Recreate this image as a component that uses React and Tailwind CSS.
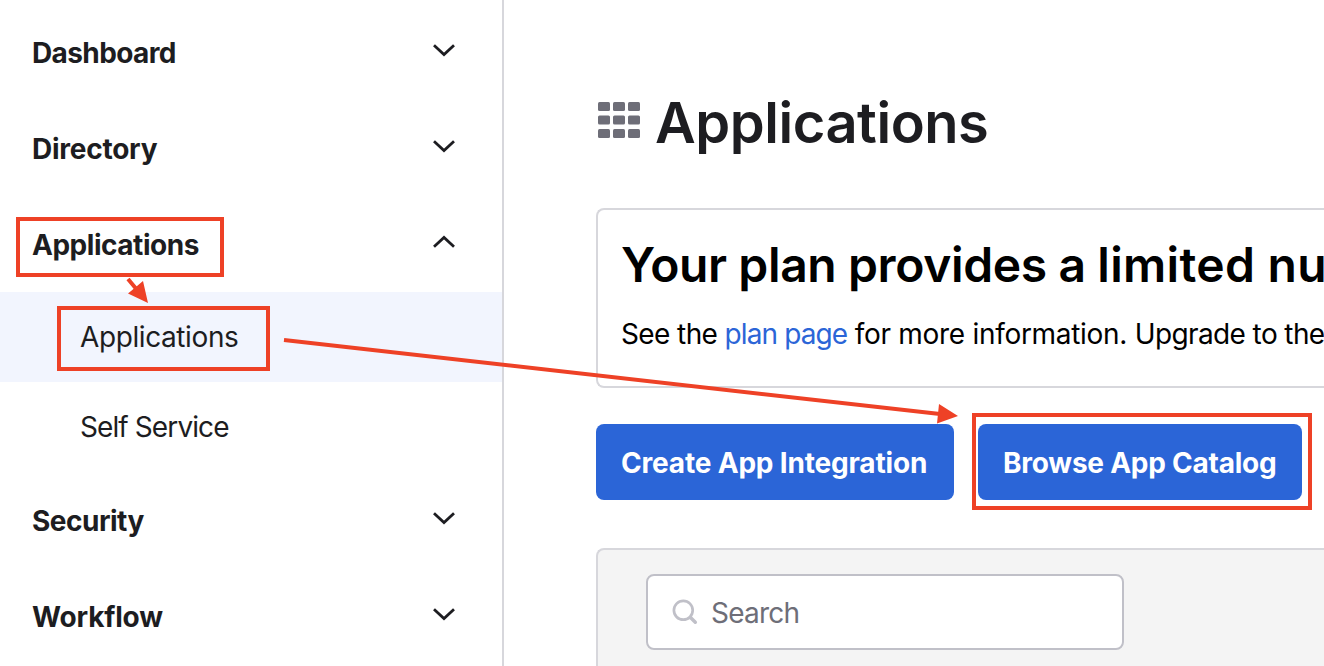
function Chevron({ up }) {
  return (
    <svg width="24" height="14" viewBox="0 0 24 14" className="-mt-[5px] shrink-0" fill="none" stroke="#1d1d21" strokeWidth="2.8">
      <path d={up ? 'M2 11.7 12 2.5l10 9.2' : 'M2 2.3 12 11.5l10-9.2'} />
    </svg>
  );
}

function NavItem({ label, up, className }) {
  return (
    <div className="flex h-24 shrink-0 items-center justify-between pr-[46px] pl-8">
      <span className={`pt-0.5 text-[28px] leading-9 font-[650] ${className}`}>{label}</span>
      <Chevron up={up} />
    </div>
  );
}

function SubItem({ label, active, className }) {
  return (
    <div className={`flex h-[90px] shrink-0 items-center pl-20 ${active ? 'bg-[#f2f5fe]' : ''}`}>
      <span className={`text-[28px] leading-9 ${className}`}>{label}</span>
    </div>
  );
}

function GridIcon() {
  return (
    <svg width="42" height="36" viewBox="0 0 42 36" className="mt-[102px] ml-0.5 shrink-0" fill="#6e6e78">
      {[0, 13.5, 27].map((y) =>
        [0, 15, 30].map((x) => <rect key={`${x}-${y}`} x={x} y={y} width="12" height="9" rx="1.5" />)
      )}
    </svg>
  );
}

function Annotations() {
  return (
    <svg className="pointer-events-none absolute inset-0" width="1324" height="666" viewBox="0 0 1324 666" fill="none" stroke="#ee4126" strokeWidth="4">
      <rect x="18" y="219" width="204" height="56" />
      <rect x="59" y="308" width="209" height="61" />
      <rect x="974" y="415" width="336" height="93" />
      <path d="M128 279 138 291M284 340 940 414" />
      <path d="M148 303 143 281 128 293.5ZM958 416 939 404 937 423.500Z" fill="#ee4126" stroke="none" />
    </svg>
  );
}

export default function App() {
  return (
    <div className="relative flex h-[666px] w-[1324px] overflow-hidden bg-white font-['Inter','Liberation_Sans',sans-serif] text-[#1d1d21]">
      <nav className="flex w-[504px] shrink-0 flex-col border-r-2 border-[#d7d7dc] pt-1">
        <NavItem label="Dashboard" className="tracking-[-0.6px]" />
        <NavItem label="Directory" className="tracking-[-0.25px]" />
        <NavItem label="Applications" up className="tracking-[-0.47px]" />
        <SubItem label="Applications" active className="tracking-[-0.4px]" />
        <SubItem label="Self Service" className="tracking-[-0.9px]" />
        <NavItem label="Security" className="tracking-[-0.5px]" />
        <NavItem label="Workflow" className="tracking-[-0.17px]" />
      </nav>
      <main className="flex min-w-0 flex-1 flex-col overflow-hidden pl-[92px] whitespace-nowrap">
        <header className="flex h-[208px] shrink-0 gap-[15px]">
          <GridIcon />
          <h1 className="mt-[89px] text-[56px] leading-[68px] font-semibold tracking-[-0.45px]">Applications</h1>
        </header>
        <section className="h-[180px] shrink-0 rounded-l-lg border-2 border-r-0 border-[#d7d7dc] pl-[23px] text-black">
          <h2 className="mt-[25px] text-[48px] leading-[60px] font-semibold tracking-[-0.38px]">
            Your plan provides a <span className="tracking-[0.3px]">limited nu</span>
          </h2>
          <p className="mt-[21px] text-[28px] leading-9">
            <span className="tracking-[-0.6px]">See the </span>
            <a className="tracking-[-0.9px] text-[#2b65d7]">plan page</a>
            <span className="tracking-[-0.3px]"> for more information. </span>
            <span className="tracking-[-0.6px]">Upgrade to the</span>
          </p>
        </section>
        <div className="mt-9 flex shrink-0 gap-6">
          <button className="flex h-[76px] w-[358px] items-center rounded-lg bg-[#2b65d7] pt-0.5 pl-[25px] text-[28px] font-[650] text-white">
            <span className="tracking-[-0.18px]">Create App Integration</span>
          </button>
          <button className="flex h-[76px] w-[324px] items-center rounded-lg bg-[#2b65d7] pt-0.5 pl-[25px] text-[28px] font-[650] text-white">
            <span className="tracking-[-0.24px]">Browse App Catalog</span>
          </button>
        </div>
        <section className="mt-12 flex-1 rounded-tl-lg border-t-2 border-l-2 border-[#d7d7dc] bg-[#f4f4f4] pt-6 pl-12">
          <div className="flex h-[76px] w-[478px] items-center gap-[13px] rounded-lg border-2 border-[#c0c0c8] bg-white pl-6">
            <svg width="26" height="26" viewBox="0 0 26 26" fill="none" stroke="#c0c0c8">
              <circle cx="11.300" cy="11.300" r="9.400" strokeWidth="2.700" />
              <path d="M18.500 18.500 23.300 23.200" strokeWidth="3.500" strokeLinecap="round" />
            </svg>
            <span className="pt-0.5 text-[28px] tracking-[-0.75px] text-[#6e6e78]">Search</span>
          </div>
        </section>
      </main>
      <Annotations />
    </div>
  );
}
